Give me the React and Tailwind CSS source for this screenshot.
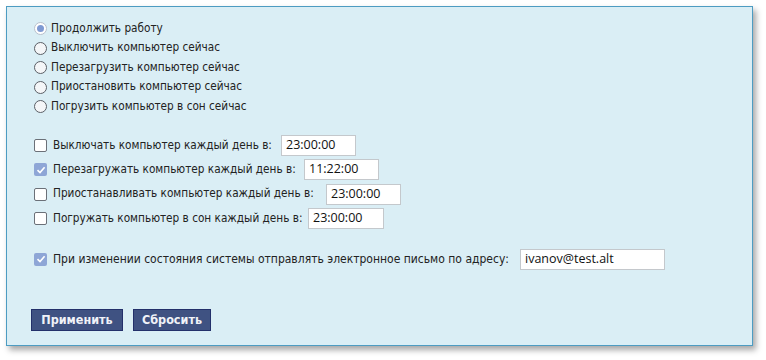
import React from "react";

const font = { fontFamily: '"DejaVu Sans Condensed", "DejaVu Sans", sans-serif' };

function Radio({ checked, label }) {
  return (
    <div className="flex items-center h-[19.5px]">
      {checked ? (
        <span className="w-[13px] h-[13px] rounded-full border border-[#b8c0cc] bg-white flex items-center justify-center">
          <span className="w-[7px] h-[7px] rounded-full bg-[#7f9ad3]" />
        </span>
      ) : (
        <span className="w-[13px] h-[13px] rounded-full border-[1.5px] border-[#5a5f66] bg-[#f4f6f8]" />
      )}
      <span className="ml-[4px] text-[11.7px] text-[#222] whitespace-nowrap">{label}</span>
    </div>
  );
}

function Check({ checked }) {
  return checked ? (
    <span className="w-[13px] h-[13px] rounded-[2px] bg-[#8ea6d6] flex items-center justify-center shrink-0">
      <svg width="10" height="10" viewBox="0 0 10 10">
        <path d="M1.5 5.2 L4 7.6 L8.6 2.2" fill="none" stroke="white" strokeWidth="1.6" />
      </svg>
    </span>
  ) : (
    <span className="w-[13px] h-[13px] rounded-[2px] border border-[#6b7078] bg-white shrink-0" />
  );
}

function TimeRow({ checked, label, value, w, lw, big }) {
  return (
    <div className="flex items-center h-[24px]">
      <Check checked={checked} />
      <span
        className={
          "ml-[6px] text-[#222] whitespace-nowrap shrink-0 " +
          (big ? "text-[12px]" : "text-[11.7px]")
        }
        style={{ width: lw }}
      >
        {label}
      </span>
      <div
        className="h-[21px] border border-[#c4c8cc] bg-white flex items-center pl-[4px] text-[12.5px] text-[#111] shrink-0"
        style={{ width: w, fontFamily: '"Open Sans", sans-serif' }}
      >
        {value}
      </div>
    </div>
  );
}

export default function App() {
  return (
    <div className="w-[766px] h-[360px] bg-white pt-[6px] pl-[6px]" style={font}>
      <div className="w-[747px] h-[340px] border border-[#4d9cc2] bg-[#daeef5] shadow-[3px_4px_6px_rgba(0,0,0,0.35)] pt-[12px] pl-[24px] flex flex-col">
        <div className="pl-[3px] flex flex-col">
          <Radio checked label="Продолжить работу" />
          <Radio label="Выключить компьютер сейчас" />
          <Radio label="Перезагрузить компьютер сейчас" />
          <Radio label="Приостановить компьютер сейчас" />
          <Radio label="Погрузить компьютер в сон сейчас" />
        </div>
        <div className="pl-[3px] flex flex-col mt-[17px] gap-[0.3px]">
          <TimeRow label="Выключать компьютер каждый день в:" value="23:00:00" w={75} lw={228} />
          <TimeRow checked label="Перезагружать компьютер каждый день в:" value="11:22:00" w={75} lw={251} />
          <TimeRow label="Приостанавливать компьютер каждый день в:" value="23:00:00" w={75} lw={273} />
          <TimeRow label="Погружать компьютер в сон каждый день в:" value="23:00:00" w={76} lw={255} />
        </div>
        <div className="pl-[3px] mt-[17px]">
          <TimeRow
            big
            checked
            label="При изменении состояния системы отправлять электронное письмо по адресу:"
            value="ivanov@test.alt"
            w={145}
            lw={467}
          />
        </div>
        <div className="flex gap-[10px] mt-[38px]">
          <button className="w-[92px] h-[22px] bg-[#3f5282] border border-[#23306a] text-[#f0f2f8] text-[12.5px] font-bold">
            Применить
          </button>
          <button className="w-[78px] h-[22px] bg-[#3f5282] border border-[#23306a] text-[#f0f2f8] text-[12.5px] font-bold">
            Сбросить
          </button>
        </div>
      </div>
    </div>
  );
}
